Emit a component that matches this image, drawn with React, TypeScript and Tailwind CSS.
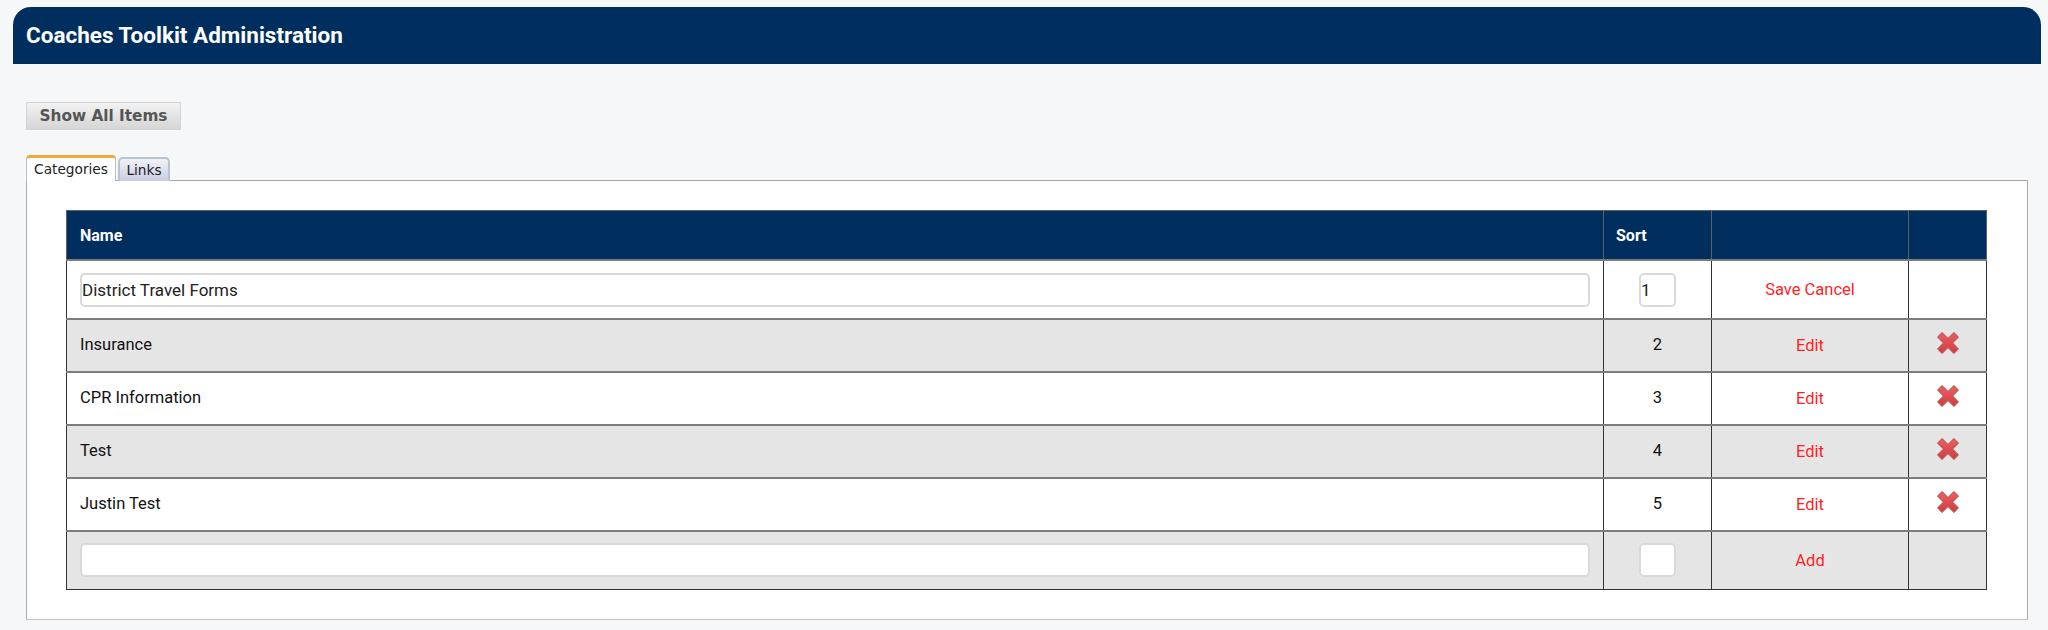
const ROWS = [
  { name: "Insurance", sort: 2 },
  { name: "CPR Information", sort: 3 },
  { name: "Test", sort: 4 },
  { name: "Justin Test", sort: 5 },
];

const CELL = "border-x border-y-2 border-x-[#333] border-y-[#7c7c7c]";
const LAST = "border-x border-t-2 border-b border-x-[#333] border-t-[#7c7c7c] border-b-[#333]";
const LINK = "pt-[2px] text-center text-[#ff1f1f]";

function DeleteIcon() {
  return (
    <svg width="26" height="26" viewBox="0 0 24 24" className="mx-auto -mt-[5px] block">
      <defs>
        <linearGradient id="x-red" x1="0" y1="0" x2="0" y2="1">
          <stop offset="0" stopColor="#ef5f62" />
          <stop offset="1" stopColor="#d03c3e" />
        </linearGradient>
      </defs>
      <path
        d="M6.500 2.500 12 8l5.500-5.500 4 4L16 12l5.500 5.500-4 4L12 16l-5.500 5.500-4-4L8 12 2.500 6.500z"
        fill="url(#x-red)"
        stroke="#bd5557"
        strokeWidth="1"
        strokeLinejoin="round"
      />
    </svg>
  );
}

function TextBox({ value, className }: { value: string; className: string }) {
  return (
    <input
      type="text"
      defaultValue={value}
      className={`h-[34px] rounded-[5px] border-2 border-[#d9d9d9] bg-white px-0 font-['Roboto',sans-serif] text-[17px] text-[#222] outline-none ${className}`}
    />
  );
}

export default function App() {
  return (
    <div className="h-[630px] overflow-hidden bg-[#f6f7f9] pl-[13px] pr-[7px] pt-[7px] font-['Roboto',sans-serif]">
      <div className="flex h-[57px] items-center rounded-t-[18px] bg-[#002e5f] pl-[13px]">
        <h1 className="text-[22.5px] font-bold text-white">Coaches Toolkit Administration</h1>
      </div>

      <div className="px-[13px]">
        <button
          type="button"
          className="mt-[38px] block h-[28px] w-[155px] border border-[#d4d4d4] bg-gradient-to-b from-[#f2f2f2] to-[#d6d6d6] font-['DejaVu_Sans',sans-serif] text-[15.3px] font-bold text-[#555]"
        >
          Show All Items
        </button>

        <div className="mt-[25px] flex items-end gap-[2px] font-['DejaVu_Sans',sans-serif] text-[13.7px]">
          <div className="relative z-10 -mb-[1px] flex h-[26px] w-[90px] items-center justify-center rounded-t-[4px] border-x border-t-[3px] border-x-[#b8c0c8] border-t-[#f5a733] bg-white text-[#222]">
            Categories
          </div>
          <div className="relative z-10 -mb-[1px] flex h-[24px] w-[52px] items-center justify-center rounded-t-[5px] border-2 border-b-0 border-[#b4c4d0] bg-gradient-to-b from-[#f2f3f8] to-[#c9cde2] text-[#222]">
            Links
          </div>
        </div>

        <div className="h-[440px] border border-[#a9a9a9] border-b-[#c4c4c4] bg-white pl-[39px] pr-[40px] pt-[29px]">
          <table className="w-[1920px] table-fixed border-collapse text-[16.5px] text-[#111]">
            <colgroup>
              <col className="w-[1537px]" />
              <col className="w-[108px]" />
              <col className="w-[197px]" />
              <col className="w-[78px]" />
            </colgroup>
            <thead>
              <tr className="h-[49px] bg-[#002e5f] text-left text-[16px] font-bold text-white">
                <th className="border border-[#606060] pl-[13px] pt-[2px]">Name</th>
                <th className="border border-[#606060] pl-[12px] pt-[2px]">Sort</th>
                <th className="border border-[#606060]"></th>
                <th className="border border-[#606060]"></th>
              </tr>
            </thead>
            <tbody>
              <tr className="h-[59px] bg-white">
                <td className={`${CELL} pl-[13px] pt-[2px]`}>
                  <TextBox value="District Travel Forms" className="block w-[1510px]" />
                </td>
                <td className={`${CELL} pt-[2px]`}>
                  <TextBox value="1" className="mx-auto block w-[37px]" />
                </td>
                <td className={`${CELL} ${LINK}`}>Save Cancel</td>
                <td className={CELL}></td>
              </tr>
              {ROWS.map((row, i) => (
                <tr key={row.name} className={`h-[53px] ${i % 2 === 0 ? "bg-[#e5e5e5]" : "bg-white"}`}>
                  <td className={`${CELL} pl-[13px]`}>{row.name}</td>
                  <td className={`${CELL} text-center`}>{row.sort}</td>
                  <td className={`${CELL} ${LINK}`}>Edit</td>
                  <td className={CELL}>
                    <DeleteIcon />
                  </td>
                </tr>
              ))}
              <tr className="h-[59px] bg-[#e5e5e5]">
                <td className={`${LAST} pl-[13px]`}>
                  <TextBox value="" className="block w-[1510px]" />
                </td>
                <td className={LAST}>
                  <TextBox value="" className="mx-auto block w-[37px]" />
                </td>
                <td className={`${LAST} ${LINK}`}>Add</td>
                <td className={LAST}></td>
              </tr>
            </tbody>
          </table>
        </div>
      </div>
    </div>
  );
}
